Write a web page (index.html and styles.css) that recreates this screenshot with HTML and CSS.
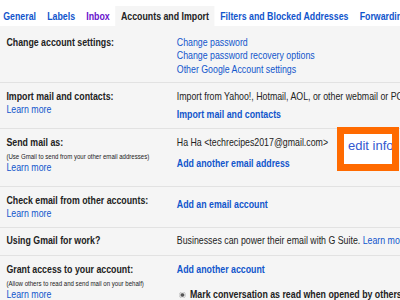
FILE: index.html
```html
<!DOCTYPE html>
<html lang="en">
<head>
    <meta charset="UTF-8">
    <meta name="viewport" content="width=device-width, initial-scale=1.0">
    <title>Settings - Accounts and Import</title>
    <link rel="stylesheet" href="styles.css">
</head>
<body>

<!-- Settings page, squeezed like the screenshot -->
<div class="page">
    <div class="tabs">
        <a class="tab" href="#">General</a>
        <a class="tab" href="#">Labels</a>
        <a class="tab visited" href="#">Inbox</a>
        <span class="tab active">Accounts and Import</span>
        <a class="tab" href="#">Filters and Blocked Addresses</a>
        <a class="tab" href="#">Forwarding and POP/IMAP</a>
    </div>

    <div class="settings">
        <div class="row row-account">
            <div class="label"><div class="title">Change account settings:</div></div>
            <div class="value links">
                <a href="#">Change password</a>
                <a href="#">Change password recovery options</a>
                <a href="#">Other Google Account settings</a>
            </div>
        </div>

        <div class="row">
            <div class="label">
                <div class="title">Import mail and contacts:</div>
                <a href="#">Learn more</a>
            </div>
            <div class="value">
                <div class="item">Import from Yahoo!, Hotmail, AOL, or other webmail or POP3 accounts.</div>
                <div class="item"><a class="add" href="#">Import mail and contacts</a></div>
            </div>
        </div>

        <div class="row row-send">
            <div class="label">
                <div class="title">Send mail as:</div>
                <div class="note">(Use Gmail to send from your other email addresses)</div>
                <a href="#">Learn more</a>
            </div>
            <div class="value">
                <div class="item">Ha Ha &lt;techrecipes2017@gmail.com&gt;</div>
                <div class="item spaced"><a class="add" href="#">Add another email address</a></div>
            </div>
        </div>

        <div class="row">
            <div class="label">
                <div class="title">Check email from other accounts:</div>
                <a href="#">Learn more</a>
            </div>
            <div class="value shifted">
                <a class="add" href="#">Add an email account</a>
            </div>
        </div>

        <div class="row row-work">
            <div class="label"><div class="title">Using Gmail for work?</div></div>
            <div class="value">
                Businesses can power their email with G Suite. <a href="#">Learn more</a>
            </div>
        </div>

        <div class="row">
            <div class="label">
                <div class="title">Grant access to your account:</div>
                <div class="note">(Allow others to read and send mail on your behalf)</div>
                <a href="#">Learn more</a>
            </div>
            <div class="value">
                <div class="item"><a class="add" href="#">Add another account</a></div>
                <div class="item option"><span class="radio"></span><b>Mark conversation as read when opened by others</b></div>
            </div>
        </div>
    </div>
</div>

<!-- Annotation drawn over the page -->
<div class="callout">edit info</div>

</body>
</html>
```

FILE: styles.css
```css
html, body {
    margin: 0;
}
body {
    position: relative;
    width: 400px;
    height: 300px;
    overflow: hidden;
    background-color: #f5f5f5;
    font-family: "Liberation Sans", Arial, sans-serif;
    font-size: 11px;
    color: #222;
}
a {
    color: #15c;
    text-decoration: none;
}

/* the screenshot is narrowed to 80% */
.page {
    width: 500px;
    transform: scaleX(0.8);
    transform-origin: 0 0;
}

/* Tabs */
.tabs {
    display: flex;
    align-items: flex-end;
    height: 26px;
    margin-left: -3px;
    background-color: #fff;
}
.tab {
    height: 20px;
    line-height: 20px;
    padding: 0 7px;
    font-weight: bold;
    white-space: nowrap;
}
.tab.visited {
    color: #61c;
}
.tab.active {
    background-color: #f5f5f5;
    color: #222;
}

/* Setting rows */
.settings {
    padding-top: 2.5px;
}
.row {
    display: flex;
    padding: 7px 0 7.5px;
    line-height: 13px;
    border-bottom: 1px solid #e2e2e2;
}
.row-account {
    padding-bottom: 6px;
}
.row-send {
    padding-bottom: 11.5px;
}
.row-work {
    padding-top: 6px;
}
.label {
    flex: none;
    width: 213px;
    padding-left: 8px;
}
.label a {
    display: block;
}
.title {
    font-weight: bold;
}
.note {
    margin-top: 3px;
    font-size: 7.6px;
    line-height: 9px;
}
.value {
    white-space: nowrap;
}
.links a {
    display: block;
    line-height: 13.5px;
}
.item + .item {
    margin-top: 4.5px;
}
.item.spaced {
    margin-top: 7.5px;
}
.item.option {
    display: flex;
    align-items: center;
    margin-top: 12.5px;
}
.shifted {
    padding-top: 4.5px;
}
.add {
    font-weight: bold;
}
.radio {
    width: 7.5px;
    height: 6px;
    margin: 0 6px 0 3px;
    border-radius: 50%;
    background: radial-gradient(ellipse, #555 30%, #bbb 45%, #e6e6e6 60%, #999 75%);
}

/* orange highlight box */
.callout {
    position: absolute;
    left: 337px;
    top: 127px;
    width: 62px;
    height: 44px;
    box-sizing: border-box;
    padding: 4px 0 0 4px;
    border: 7px solid #ff6a00;
    background-color: #fff;
    overflow: hidden;
    white-space: nowrap;
    font-size: 13px;
    line-height: 15px;
    color: #3358d0;
}
```
